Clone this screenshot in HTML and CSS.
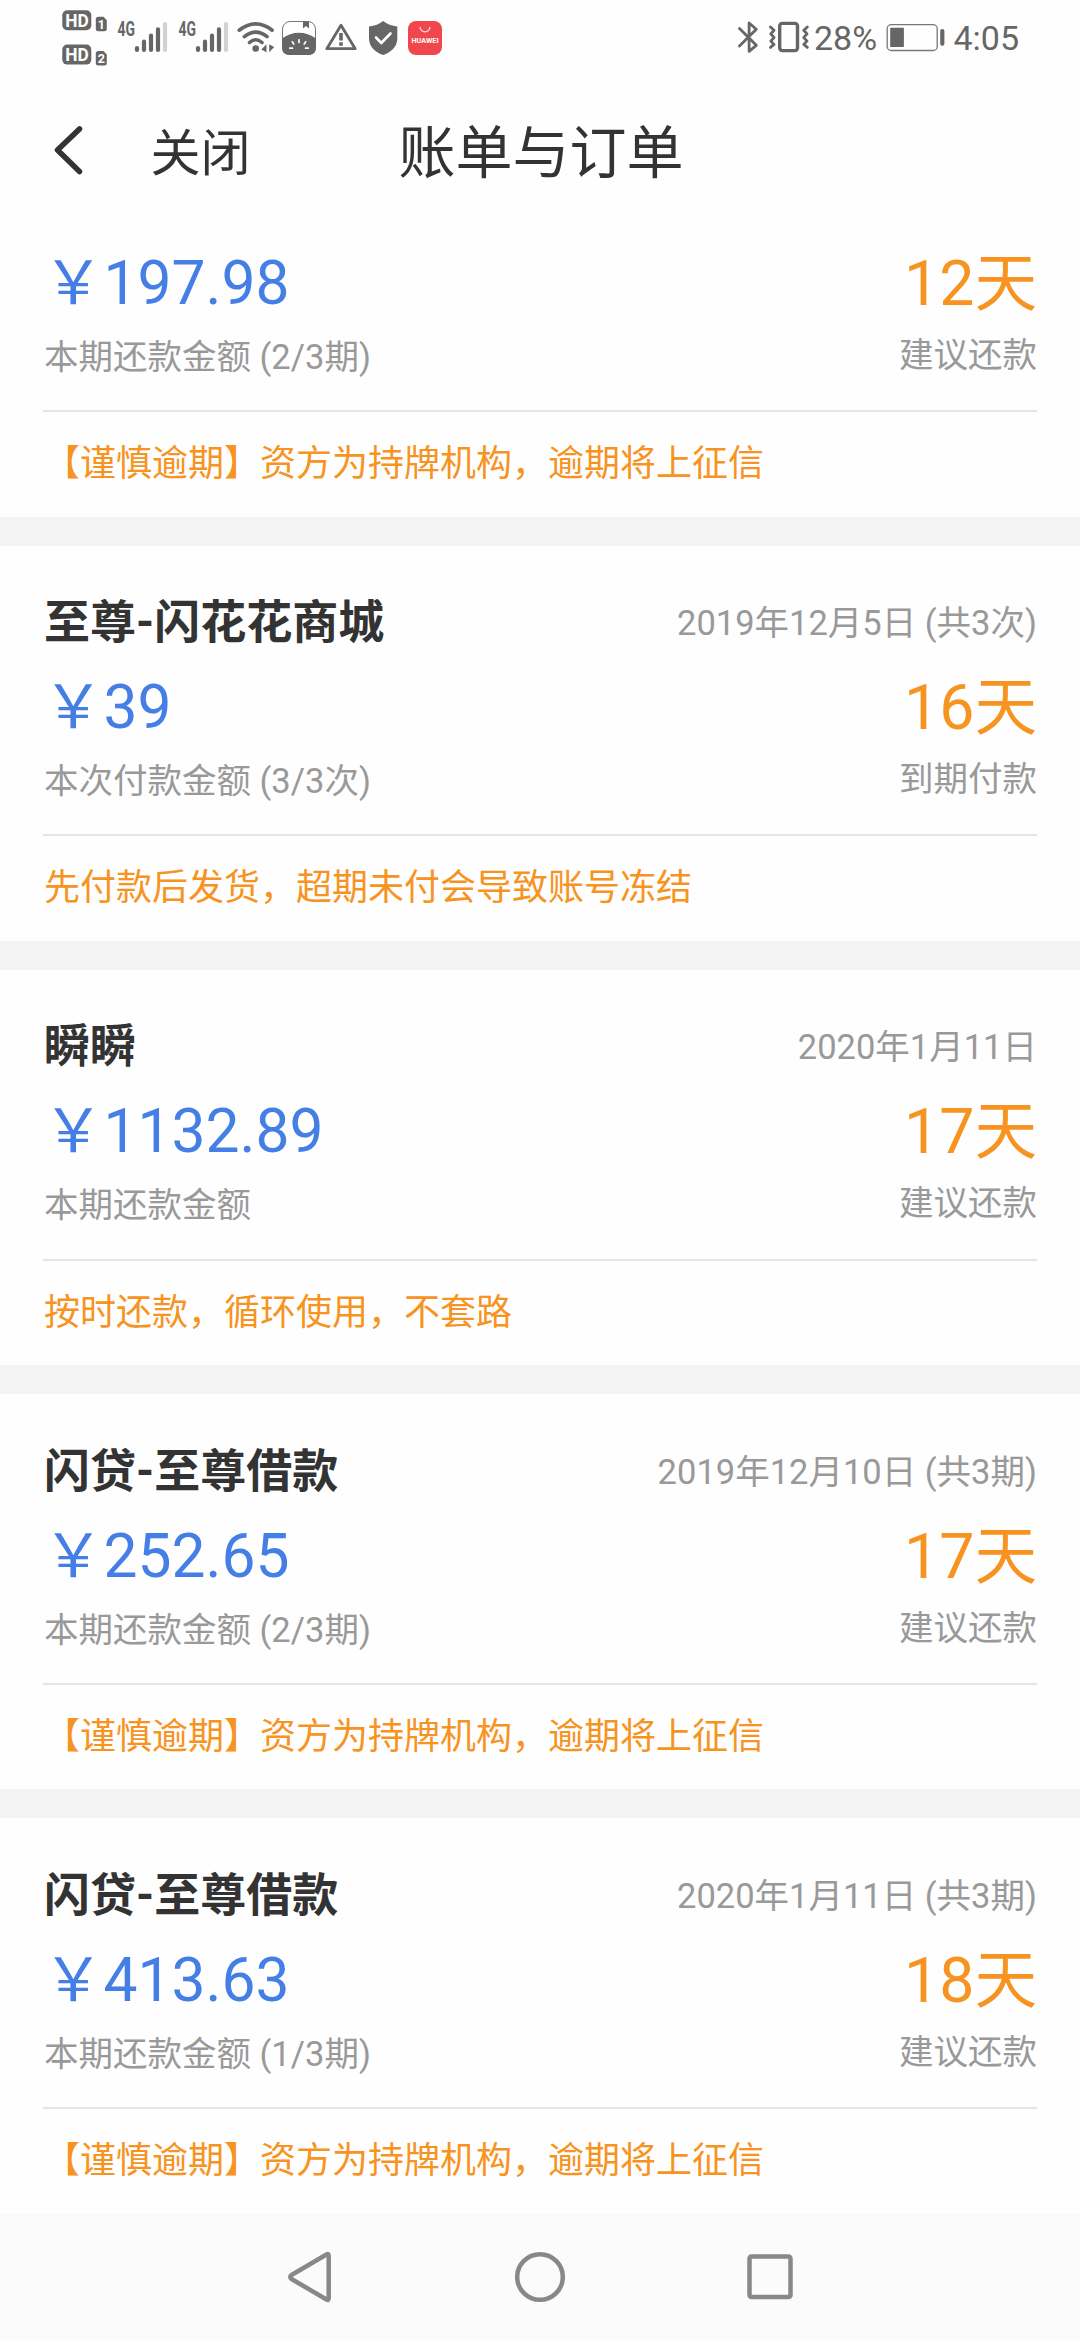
FILE: index.html
```
<!DOCTYPE html>
<html lang="zh-CN">
<head>
<meta charset="utf-8">
<title>账单与订单</title>
<link rel="stylesheet" href="styles.css">
</head>
<body>
<div class="screen">
  <div class="status">
    <svg class="status-left" width="386" height="76" viewBox="60 0 386 76">
      <g fill="#666">
        <rect x="62.3" y="10.3" width="29" height="20" rx="5"/>
        <rect x="62.3" y="44.6" width="29" height="20" rx="5"/>
        <path d="M98.500 16.800h5l3.300 3.500v8.500q0 2.500-2.500 2.500h-6q-2.500 0-2.500-2.500v-9.500q0-2.500 2.700-2.500z"/>
        <path d="M98.500 50.900h5l3.300 3.500v8.500q0 2.500-2.500 2.500h-6q-2.500 0-2.500-2.500v-9.500q0-2.500 2.700-2.500z"/>
      </g>
      <g class="hd" fill="#fff">
        <text x="65.300" y="27" textLength="23.500" lengthAdjust="spacingAndGlyphs">HD</text>
        <text x="65.300" y="61.300" textLength="23.500" lengthAdjust="spacingAndGlyphs">HD</text>
      </g>
      <g class="sim" fill="#fff">
        <text x="97.800" y="28.600">1</text>
        <text x="97.800" y="62.700">2</text>
      </g>
      <g class="net" fill="#666">
        <text x="117.500" y="35.700" textLength="17.500" lengthAdjust="spacingAndGlyphs">4G</text>
        <text x="178.500" y="35.700" textLength="17.500" lengthAdjust="spacingAndGlyphs">4G</text>
      </g>
      <g fill="none" stroke="#666" stroke-width="4.200" stroke-linecap="round">
        <path d="M137 48v2M144 41.700V50M151 35.500V50M158 29.300V50M198 48v2M205 41.700V50M212 35.500V50M219 29.300V50"/>
        <path stroke="#d2d2d2" d="M165 24V50M226 24V50"/>
      </g>
      <g fill="none" stroke="#666" stroke-width="3.600" stroke-linecap="round">
        <path d="M239.200 30.200Q255.700 17.500 272.200 30.200M244.400 36.700Q255.700 27.700 267 36.700M249.500 42.500Q255.700 37 262 42.500"/>
      </g>
      <g fill="#666">
        <circle cx="255.700" cy="48.500" r="3.300"/>
        <path d="M261.300 49.500l5.200-5.200v8zM269.200 44.300l5 2.700-5 5.300z"/>
      </g>
      <rect x="282.500" y="21.500" width="33" height="33" rx="7.500" fill="#fff" stroke="#777" stroke-width="1"/>
      <path fill="#666" d="M282 38.500Q290 32.800 299 32.800T316 38.500V47.500Q316 55 308.500 55H289.500Q282 55 282 47.500zM303 21.500h6v7l-3-2.500-3 2.500z"/>
      <path stroke="#fff" stroke-width="1.700" stroke-linecap="round" d="M299 39.800v2.600M292.300 41.800l1.500 2.300M305.700 41.800l-1.500 2.300M289.800 48.200h2.700M308.200 48.200h-2.700"/>
      <path fill="none" stroke="#666" stroke-width="2.800" stroke-linejoin="round" d="M341 25.200L355.200 48.700H326.800z"/>
      <path fill="#666" d="M339.200 33h3.600v7.500h-3.600zM339.200 42.300h3.600v3.400h-3.600z"/>
      <path fill="#666" d="M383.100 21Q389 25.500 397.300 26.500V38Q397.300 50 383.100 55Q369 50 369 38V26.500Q377.500 25.500 383.100 21z"/>
      <path fill="none" stroke="#fff" stroke-width="2.600" stroke-linecap="round" stroke-linejoin="round" d="M376 37.500l5.300 5.500L390.500 33.500"/>
      <rect x="408" y="21" width="34" height="34" rx="8" fill="#f0474d"/>
      <path fill="none" stroke="#fff" stroke-opacity=".85" stroke-width="1.200" d="M420 27a5 4.800 0 0 0 10 0"/>
      <text class="brand" fill="#fff" x="411.500" y="42.700" textLength="27" lengthAdjust="spacingAndGlyphs">HUAWEI</text>
    </svg>
    <div class="status-right">
      <svg width="20" height="34" viewBox="737.500 20 20 34"><path fill="none" stroke="#666" stroke-width="2.800" stroke-linejoin="round" stroke-linecap="round" d="M739 28.500L755.800 45.300L748.600 51.300V23L755.800 29.300L739 46"/></svg>
      <svg class="vibrate" width="40" height="34" viewBox="769 20 40 34"><rect x="779.700" y="23.400" width="17.800" height="27.200" rx="2.500" fill="none" stroke="#666" stroke-width="3.400"/><path fill="none" stroke="#666" stroke-width="2.800" stroke-linejoin="round" stroke-linecap="round" d="M770.500 27l3.500 3.300-3.200 3.600 3.200 3.600-3.200 3.600 3.200 3.300-3.500 3M807.300 27l-3.500 3.300 3.200 3.600-3.200 3.600 3.200 3.600-3.200 3.300 3.500 3"/></svg>
      <span class="percent">28%</span>
      <svg class="battery" width="59" height="34" viewBox="885.500 20 59 34"><rect x="886.700" y="24.700" width="50" height="25.800" rx="4" fill="none" stroke="#777" stroke-width="1.300"/><rect x="889.700" y="27.700" width="13.700" height="19.300" rx=".7" fill="#666"/><rect x="939.700" y="29" width="4.200" height="16.800" rx="2" fill="#666"/></svg>
      <span class="clock">4:05</span>
    </div>
  </div>

  <header class="header">
    <svg class="back" width="34" height="54" viewBox="52 123 34 54"><path fill="none" stroke="#333" stroke-width="5.500" stroke-linecap="round" stroke-linejoin="round" d="M79.500 129L57.500 150L79.500 171.500"/></svg>
    <span class="close">关闭</span>
    <h1 class="title">账单与订单</h1>
  </header>

  <main class="list">
    <section class="card scrolled">
      <div class="row money"><span class="amount">￥197.98</span><span class="days">12天</span></div>
      <div class="row labels"><span>本期还款金额 (2/3期)</span><span class="action">建议还款</span></div>
      <p class="tip">【谨慎逾期】资方为持牌机构，逾期将上征信</p>
    </section>
    <section class="card">
      <div class="row head"><h2 class="name">至尊-闪花花商城</h2><span class="date">2019年12月5日 (共3次)</span></div>
      <div class="row money"><span class="amount">￥39</span><span class="days">16天</span></div>
      <div class="row labels"><span>本次付款金额 (3/3次)</span><span class="action">到期付款</span></div>
      <p class="tip">先付款后发货，超期未付会导致账号冻结</p>
    </section>
    <section class="card">
      <div class="row head"><h2 class="name">瞬瞬</h2><span class="date">2020年1月11日</span></div>
      <div class="row money"><span class="amount">￥1132.89</span><span class="days">17天</span></div>
      <div class="row labels tall"><span>本期还款金额</span><span class="action">建议还款</span></div>
      <p class="tip">按时还款，循环使用，不套路</p>
    </section>
    <section class="card lower">
      <div class="row head"><h2 class="name">闪贷-至尊借款</h2><span class="date">2019年12月10日 (共3期)</span></div>
      <div class="row money"><span class="amount">￥252.65</span><span class="days">17天</span></div>
      <div class="row labels"><span>本期还款金额 (2/3期)</span><span class="action">建议还款</span></div>
      <p class="tip">【谨慎逾期】资方为持牌机构，逾期将上征信</p>
    </section>
    <section class="card lower">
      <div class="row head"><h2 class="name">闪贷-至尊借款</h2><span class="date">2020年1月11日 (共3期)</span></div>
      <div class="row money"><span class="amount">￥413.63</span><span class="days">18天</span></div>
      <div class="row labels"><span>本期还款金额 (1/3期)</span><span class="action">建议还款</span></div>
      <p class="tip">【谨慎逾期】资方为持牌机构，逾期将上征信</p>
    </section>
  </main>

  <nav class="nav">
    <svg width="50" height="52" viewBox="284 2251 50 52"><path d="M325.500 2254.500Q327.700 2253 327.700 2256V2298Q327.700 2301 325.500 2299.500L290.500 2279Q288 2277 290.500 2275z"/></svg>
    <svg width="50" height="52" viewBox="515 2251 50 52"><circle cx="540" cy="2277" r="22.800"/></svg>
    <svg width="50" height="52" viewBox="744 2251 50 52"><rect x="748.500" y="2256.500" width="41" height="40.500" rx="2"/></svg>
  </nav>
</div>
</body>
</html>
```
FILE: styles.css
```
* { box-sizing: border-box; margin: 0; padding: 0; }
body {
  background: #fefefe;
  font-family: Roboto, "Noto Sans CJK SC", sans-serif;
  color: #333;
}
.screen {
  width: 1080px;
  height: 2340px;
  display: flex;
  flex-direction: column;
  overflow: hidden;
}
svg { display: block; flex: none; }

.status {
  height: 76px;
  flex: none;
  display: flex;
  justify-content: space-between;
  padding: 0 61.500px 0 60px;
  color: #666;
}
.hd { font: 700 18.500px Roboto, sans-serif; }
.sim { font: 700 12.500px Roboto, sans-serif; }
.net { font: 700 19.500px Roboto, sans-serif; }
.brand { font: 700 7.500px Roboto, sans-serif; }
.status-right {
  display: flex;
  align-items: center;
  height: 74px;
  font-size: 34px;
  line-height: 74px;
}
.vibrate { margin-left: 11.500px; }
.percent { margin-left: 5px; padding-top: 1px; width: 63px; }
.battery { margin-left: 8.500px; }
.clock { margin-left: 9px; padding-top: 1px; width: 65px; }

.header {
  height: 168px;
  flex: none;
  display: grid;
  grid-template-columns: 98.500px 190.500px 504px 1fr;
  padding: 38px 0 0 52px;
  line-height: 80px;
}
.back { margin-top: 9px; }
.close { font-size: 50px; }
.title { font-size: 57px; font-weight: 400; text-align: center; width: 400px; }

.card {
  height: 424px;
  padding: 46px 43px 0;
  border-bottom: 29px solid #f4f4f4;
}
.card.scrolled { height: 302px; padding-top: 0; }
.card.lower { padding-top: 47px; }
.card:last-child { height: 396px; border-bottom: 0; }
.row { display: flex; justify-content: space-between; white-space: nowrap; padding-left: 1px; }
.head { height: 60px; line-height: 60px; margin-bottom: 16px; }
.name { font-size: 46px; font-weight: 700; }
.date { font-size: 34.500px; color: #999; padding-top: 1px; }
.money { height: 80px; line-height: 80px; margin-bottom: 9px; padding-left: 0; }
.amount { font-size: 60.500px; color: #457fe6; }
.days { font-size: 62.600px; color: #f79321; }
.labels {
  height: 77px;
  line-height: 48px;
  font-size: 34.500px;
  color: #999;
}
.labels.tall { height: 78px; }
.action { margin-top: -2px; }
.tip {
  border-top: 2px solid #e6e6e6;
  padding: 28px 0 0 1px;
  line-height: 48px;
  font-size: 36px;
  color: #f79321;
}

.nav {
  flex: 1;
  display: flex;
  align-items: center;
  justify-content: center;
  gap: 180px;
  background: #fbfbfb;
}
.nav svg { fill: none; stroke: #888; stroke-width: 4.500; stroke-linejoin: round; }
```
